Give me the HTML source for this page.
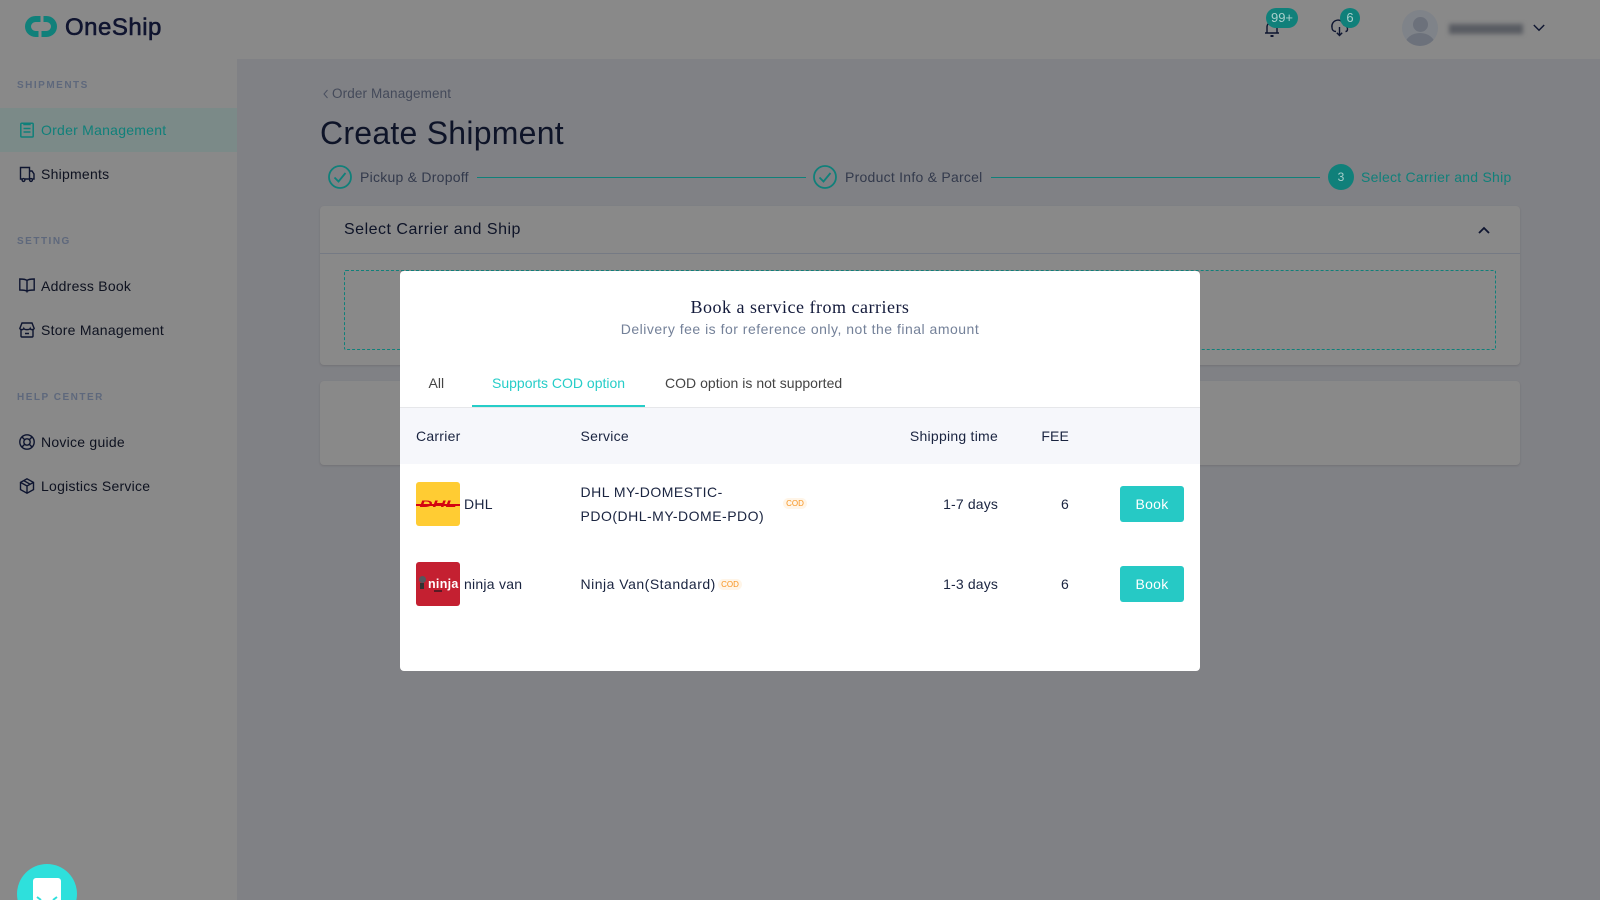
<!DOCTYPE html>
<html><head><meta charset="utf-8"><title>OneShip</title>
<style>
*{box-sizing:border-box}
html,body{margin:0;padding:0;width:1600px;height:900px;overflow:hidden}
#p{position:relative;width:1600px;height:900px;overflow:hidden;background:#808185;font-family:"Liberation Sans",sans-serif;font-size:14px}
.a{position:absolute;white-space:nowrap}
.t{position:absolute;white-space:nowrap;line-height:20px;letter-spacing:.25px}
svg{position:absolute;overflow:visible}
.nav{color:#0e1220;left:41px}
.sh{color:#5e687c;font-size:10px;font-weight:bold;letter-spacing:1.500px;left:17px;line-height:14px;position:absolute}
.d{color:#1a2440}
.s{letter-spacing:.5px}
.cod{position:absolute;width:24px;height:11px;border-radius:6px;background:#fff5e8;color:#f7931e;font-size:8px;line-height:11px;text-align:center}
</style></head><body><div id="p">
<div class="a" style="left:0;top:0;width:1600px;height:59px;background:#898989"></div>
<div class="a" style="left:0;top:59px;width:237px;height:841px;background:#898989"></div>

<svg style="left:25px;top:16px" width="32" height="21" viewBox="0 0 32 21" fill="none" stroke="#10807a" stroke-width="6"><path d="M15.500 3H10.500a7.500 7.500 0 0 0 0 15H13.500"/><path d="M16.500 18H21.500a7.500 7.500 0 0 0 0-15H18.500"/></svg>
<div class="a" style="left:65px;top:12px;font-size:24px;line-height:32px;color:#101530;-webkit-text-stroke:.6px #101530;letter-spacing:.5px">OneShip</div>

<div class="sh" style="top:79px">SHIPMENTS</div>
<div class="a" style="left:0;top:108px;width:237px;height:44px;background:#7b8a88"></div>
<svg style="left:20px;top:122px" width="14" height="16" viewBox="0 0 14 16" fill="none" stroke="#10807a" stroke-width="1.500"><rect x=".8" y="1.200" width="12.400" height="13.800" rx="1"/><path d="M4 .5v2h6v-2M3.500 6.500h7M3.500 10h7"/></svg>
<div class="t" style="left:41px;top:120px;color:#10807a">Order Management</div>
<svg style="left:19px;top:166px" width="16" height="16" viewBox="0 0 16 16" fill="none" stroke="#0e1530" stroke-width="1.400"><path d="M3 13H1.500V1.500h9V13H6M10.500 5H13l2 3v5h-1.500M10.500 13H11"/><circle cx="4.500" cy="14" r="1.400"/><circle cx="12" cy="14" r="1.400"/></svg>
<div class="t nav" style="top:164px">Shipments</div>

<div class="sh" style="top:235px">SETTING</div>
<svg style="left:19px;top:278px" width="16" height="15" viewBox="0 0 16 15" fill="none" stroke="#0e1530" stroke-width="1.400"><path d="M8 2.500C7 1.500 5 1 .8 1v11c4 0 6 .2 7.200 1.200C9.200 12.200 11 12 15.200 12V1C11 1 9 1.500 8 2.500zM8 2.500V14.500"/></svg>
<div class="t nav" style="top:276px">Address Book</div>
<svg style="left:19px;top:322px" width="16" height="16" viewBox="0 0 16 16" fill="none" stroke="#0e1530" stroke-width="1.400"><path d="M3 1h10l2.200 5.500c-.6 1.500-3.500 1.500-4 0-.6 1.500-5.800 1.500-6.400 0-.6 1.500-3.400 1.500-4 0zM2 7.500V14a1 1 0 0 0 1 1h10a1 1 0 0 0 1-1V7.500M6 11.500h4"/></svg>
<div class="t nav" style="top:320px">Store Management</div>

<div class="sh" style="top:391px">HELP CENTER</div>
<svg style="left:19px;top:434px" width="16" height="16" viewBox="0 0 16 16" fill="none" stroke="#0e1530" stroke-width="1.400"><circle cx="8" cy="8" r="7.200"/><circle cx="8" cy="8" r="3.200"/><path d="M3 3l2.700 2.700M13 3l-2.700 2.700M3 13l2.700-2.700M13 13l-2.700-2.700"/></svg>
<div class="t nav" style="top:432px">Novice guide</div>
<svg style="left:19px;top:478px" width="16" height="16" viewBox="0 0 16 16" fill="none" stroke="#0e1530" stroke-width="1.400"><path d="M8 .8l6.500 3.600v7.200L8 15.200l-6.500-3.600V4.400zM1.500 4.400L8 8l6.500-3.600M8 8v7.200M4.800 2.600l6.500 3.700"/></svg>
<div class="t nav" style="top:476px">Logistics Service</div>

<svg style="left:1264px;top:18px" width="18" height="20" viewBox="0 0 18 20" fill="none" stroke="#0e1530" stroke-width="1.400"><path d="M1 15h14M3 15V9a5 5 0 0 1 10 0v6"/><path d="M6.500 18h3" stroke-width="2"/></svg>
<div class="a" style="left:1266px;top:8px;width:32px;height:20px;border-radius:10px;background:#10807a;color:#a8cfcc;font-size:13px;line-height:20px;text-align:center">99+</div>
<svg style="left:1331px;top:19px" width="18" height="18" viewBox="0 0 18 18" fill="none" stroke="#0e1530" stroke-width="1.400"><path d="M5 12.500C2.500 12.500 1 11 1 8.500A6 6 0 0 1 13 6c2 0 3.500 2 3.500 4 0 1.500-.8 2.500-2 2.500M8.500 8v8.500M5.800 13.800l2.700 2.700 2.700-2.700"/></svg>
<div class="a" style="left:1340px;top:8px;width:20px;height:20px;border-radius:10px;background:#10807a;color:#a8cfcc;font-size:13px;line-height:20px;text-align:center">6</div>
<div class="a" style="left:1402px;top:10px;width:36px;height:36px;border-radius:50%;background:#7f8389;overflow:hidden">
<div class="a" style="left:11px;top:7px;width:15px;height:15px;border-radius:50%;background:#6c717b"></div>
<div class="a" style="left:3px;top:23px;width:30px;height:24px;border-radius:50%;background:#6c717b"></div></div>
<div class="a" style="left:1449px;top:24px;width:74px;height:10px;background:#5a5d63;filter:blur(2px)"></div>
<svg style="left:1533px;top:24px" width="12" height="8" viewBox="0 0 12 8" fill="none" stroke="#0e1530" stroke-width="1.400"><path d="M.8 1l5.200 5.200L11.200 1"/></svg>

<svg style="left:323px;top:89px" width="6" height="10" viewBox="0 0 6 10" fill="none" stroke="#4a5060" stroke-width="1"><path d="M4.500 1L1 5l3.500 4"/></svg>
<div class="t" style="left:332px;top:84px;color:#444a5a;font-size:13.500px;letter-spacing:.13px">Order Management</div>
<div class="a" style="left:320px;top:113px;font-size:32px;line-height:40px;color:#0e1428;letter-spacing:.25px">Create Shipment</div>

<svg style="left:328px;top:165px" width="24" height="24" viewBox="0 0 24 24" fill="none" stroke="#10807a" stroke-width="1.800"><circle cx="12" cy="12" r="11"/><path d="M6.500 12.500l4 4L17.500 8"/></svg>
<div class="t" style="left:360px;top:167px;color:#333a4c">Pickup &amp; Dropoff</div>
<div class="a" style="left:477px;top:177px;width:329px;height:1px;background:#10807a"></div>
<svg style="left:813px;top:165px" width="24" height="24" viewBox="0 0 24 24" fill="none" stroke="#10807a" stroke-width="1.800"><circle cx="12" cy="12" r="11"/><path d="M6.500 12.500l4 4L17.500 8"/></svg>
<div class="t" style="left:845px;top:167px;color:#333a4c">Product Info &amp; Parcel</div>
<div class="a" style="left:991px;top:177px;width:329px;height:1px;background:#10807a"></div>
<div class="a" style="left:1328px;top:164px;width:26px;height:26px;border-radius:50%;background:#10807a;color:#a8cfcc;font-size:12px;line-height:26px;text-align:center">3</div>
<div class="t" style="left:1361px;top:167px;color:#10807a">Select Carrier and Ship</div>

<div class="a" style="left:320px;top:206px;width:1200px;height:159px;background:#898989;border-radius:4px;box-shadow:0 1px 2px rgba(0,0,0,.12)"></div>
<div class="a" style="left:320px;top:253px;width:1200px;height:1px;background:#757a84"></div>
<div class="t" style="left:344px;top:220px;font-size:16px;line-height:20px;color:#0e1428;letter-spacing:.5px">Select Carrier and Ship</div>
<svg style="left:1478px;top:226px" width="12" height="8" viewBox="0 0 12 8" fill="none" stroke="#0e1530" stroke-width="1.800"><path d="M1 7l5-5 5 5"/></svg>
<div class="a" style="left:344px;top:270px;width:1152px;height:80px;border:1px dashed #10807a;border-radius:2px"></div>
<div class="a" style="left:320px;top:381px;width:1200px;height:84px;background:#898989;border-radius:4px;box-shadow:0 1px 2px rgba(0,0,0,.12)"></div>

<div class="a" style="left:17px;top:864px;width:60px;height:60px;border-radius:50%;background:#2ee0dc"></div>
<div class="a" style="left:33px;top:878px;width:28px;height:30px;border-radius:3px;background:#fff"></div>
<svg style="left:37px;top:897px" width="20" height="4" viewBox="0 0 20 4" fill="none" stroke="#2ee0dc" stroke-width="2"><path d="M0 0l4 3M20 0l-4 3"/></svg>

<div class="a" style="left:400px;top:271px;width:800px;height:400px;background:#fff;border-radius:4px;overflow:hidden">
 <div class="a" style="left:0;width:800px;top:25px;text-align:center;font-family:'Liberation Serif',serif;font-size:18px;line-height:22px;letter-spacing:.5px;color:#12193a">Book a service from carriers</div>
 <div class="a" style="left:0;width:800px;top:48px;text-align:center;font-size:14px;line-height:20px;letter-spacing:.5px;color:#748199">Delivery fee is for reference only, not the final amount</div>
 <div class="t" style="left:28.500px;top:102px;color:#444;letter-spacing:0">All</div>
 <div class="t" style="left:92px;top:102px;color:#26cdc8;letter-spacing:0">Supports COD option</div>
 <div class="t" style="left:265px;top:102px;color:#444;letter-spacing:.02px">COD option is not supported</div>
 <div class="a" style="left:72px;top:134px;width:173px;height:2px;background:#26cdc8"></div>
 <div class="a" style="left:0;top:136px;width:800px;height:1px;background:#e6e7ea"></div>
 <div class="a" style="left:0;top:137px;width:800px;height:56px;background:#f6f7fb"></div>
 <div class="t d" style="left:16px;top:155px">Carrier</div>
 <div class="t d" style="left:180.500px;top:155px">Service</div>
 <div class="t d" style="right:202px;top:155px">Shipping time</div>
 <div class="t d" style="right:131px;top:155px;letter-spacing:.15px">FEE</div>

 <div class="a" style="left:16px;top:211px;width:44px;height:44px;border-radius:3px;background:#ffcc33;overflow:hidden">
  <div class="a" style="left:0;top:22px;width:44px;height:2px;background:#d40511"></div>
  <div class="a" style="left:0;width:44px;top:16px;text-align:center;font-size:9px;line-height:12px;font-weight:bold;font-style:italic;color:#d40511;transform:scaleX(2)">DHL</div>
 </div>
 <div class="t d" style="left:64px;top:223px">DHL</div>
 <div class="t d s" style="left:180.500px;top:209px;line-height:24px">DHL MY-DOMESTIC-<br>PDO(DHL-MY-DOME-PDO)</div>
 <div class="cod" style="left:383px;top:227px">COD</div>
 <div class="t d" style="right:202px;top:223px;letter-spacing:.15px">1-7 days</div>
 <div class="t d" style="right:131px;top:223px">6</div>
 <div class="a" style="left:720px;top:215px;width:64px;height:36px;border-radius:3px;background:#26c9c5;color:#fff;line-height:36px;text-align:center;letter-spacing:.25px">Book</div>

 <div class="a" style="left:16px;top:291px;width:44px;height:44px;border-radius:3px;background:#c42031;overflow:hidden">
  <div class="a" style="left:3px;top:14px;width:7px;height:7px;border-radius:50%;background:#55565c"></div>
  <div class="a" style="left:4px;top:21px;width:4px;height:6px;background:#333"></div>
  <div class="a" style="left:12px;top:14px;font-size:12.500px;line-height:16px;font-weight:bold;color:#fff;letter-spacing:.3px">ninja</div>
  <div class="a" style="left:18px;top:28px;width:8px;height:2px;background:#5a1a24"></div>
 </div>
 <div class="t d" style="left:64px;top:303px">ninja van</div>
 <div class="t d s" style="left:180.500px;top:303px">Ninja Van(Standard)</div>
 <div class="cod" style="left:318px;top:308px">COD</div>
 <div class="t d" style="right:202px;top:303px;letter-spacing:.15px">1-3 days</div>
 <div class="t d" style="right:131px;top:303px">6</div>
 <div class="a" style="left:720px;top:295px;width:64px;height:36px;border-radius:3px;background:#26c9c5;color:#fff;line-height:36px;text-align:center;letter-spacing:.25px">Book</div>
</div>
</div></body></html>
